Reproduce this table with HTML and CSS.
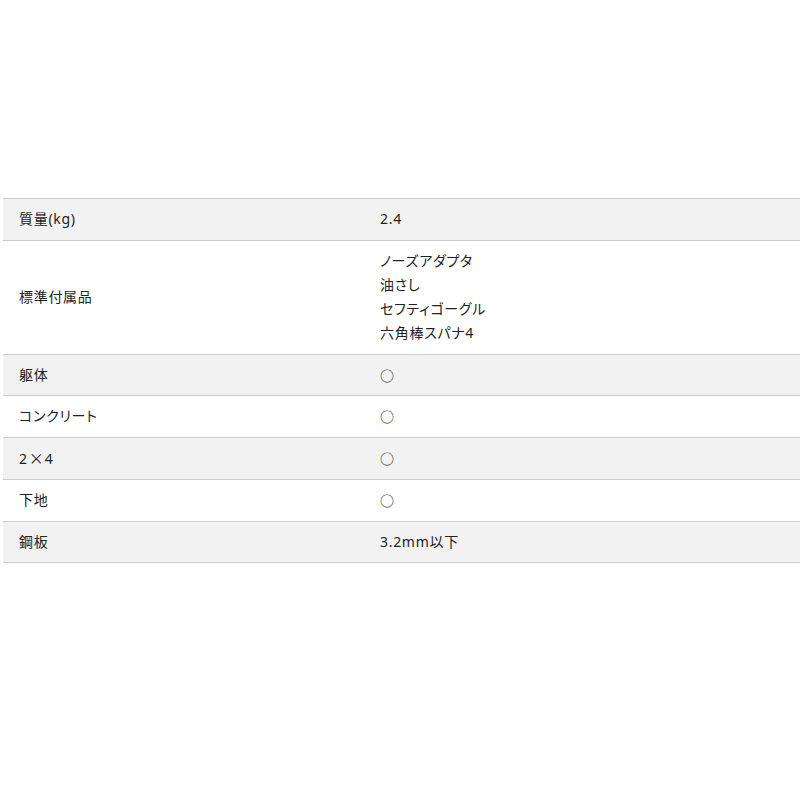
FILE: index.html
```html
<!DOCTYPE html>
<html lang="ja">
<head>
<meta charset="utf-8">
<link rel="stylesheet" href="styles.css">
</head>
<body>
<div class="wrap">
<table class="spec">
<tr class="odd"><th>質量(kg)</th><td>2.4</td></tr>
<tr><th>標準付属品</th><td class="multi">ノーズアダプタ<br>油さし<br>セフティゴーグル<br>六角棒スパナ4</td></tr>
<tr class="odd"><th>躯体</th><td class="mark">○</td></tr>
<tr><th>コンクリート</th><td class="mark">○</td></tr>
<tr class="odd"><th>2<span class="cjk">×</span>4</th><td class="mark">○</td></tr>
<tr><th>下地</th><td class="mark">○</td></tr>
<tr class="odd"><th>鋼板</th><td>3.2mm以下</td></tr>
</table>
</div>
</body>
</html>
```
FILE: styles.css
```css
html, body {
  margin: 0;
  padding: 0;
  background: #fff;
}
body {
  font-family: "Noto Sans", "Noto Sans CJK JP", sans-serif;
  font-size: 14px;
  color: #222;
  overflow: hidden;
}
.wrap {
  padding: 198px 0 0 3px;
}
.spec {
  width: 800px;
  border-collapse: collapse;
  border-top: 1px solid #cccccc;
}
.spec tr {
  border-bottom: 1px solid #cccccc;
}
.spec tr.odd {
  background: #f2f2f2;
}
.spec th, .spec td {
  text-align: left;
  font-weight: normal;
  padding: 8px 16px;
  line-height: 24.5px;
  vertical-align: middle;
  font-feature-settings: "palt";
  letter-spacing: 0.7px;
}
.spec td.multi {
  line-height: 24.25px;
}
.spec .cjk, .spec .mark {
  font-family: "Noto Sans CJK JP", sans-serif;
  font-feature-settings: normal;
  letter-spacing: 0;
}
.spec .cjk {
  font-size: 15px;
  padding: 0 1px;
}
.spec th {
  width: 329px;
}
```
